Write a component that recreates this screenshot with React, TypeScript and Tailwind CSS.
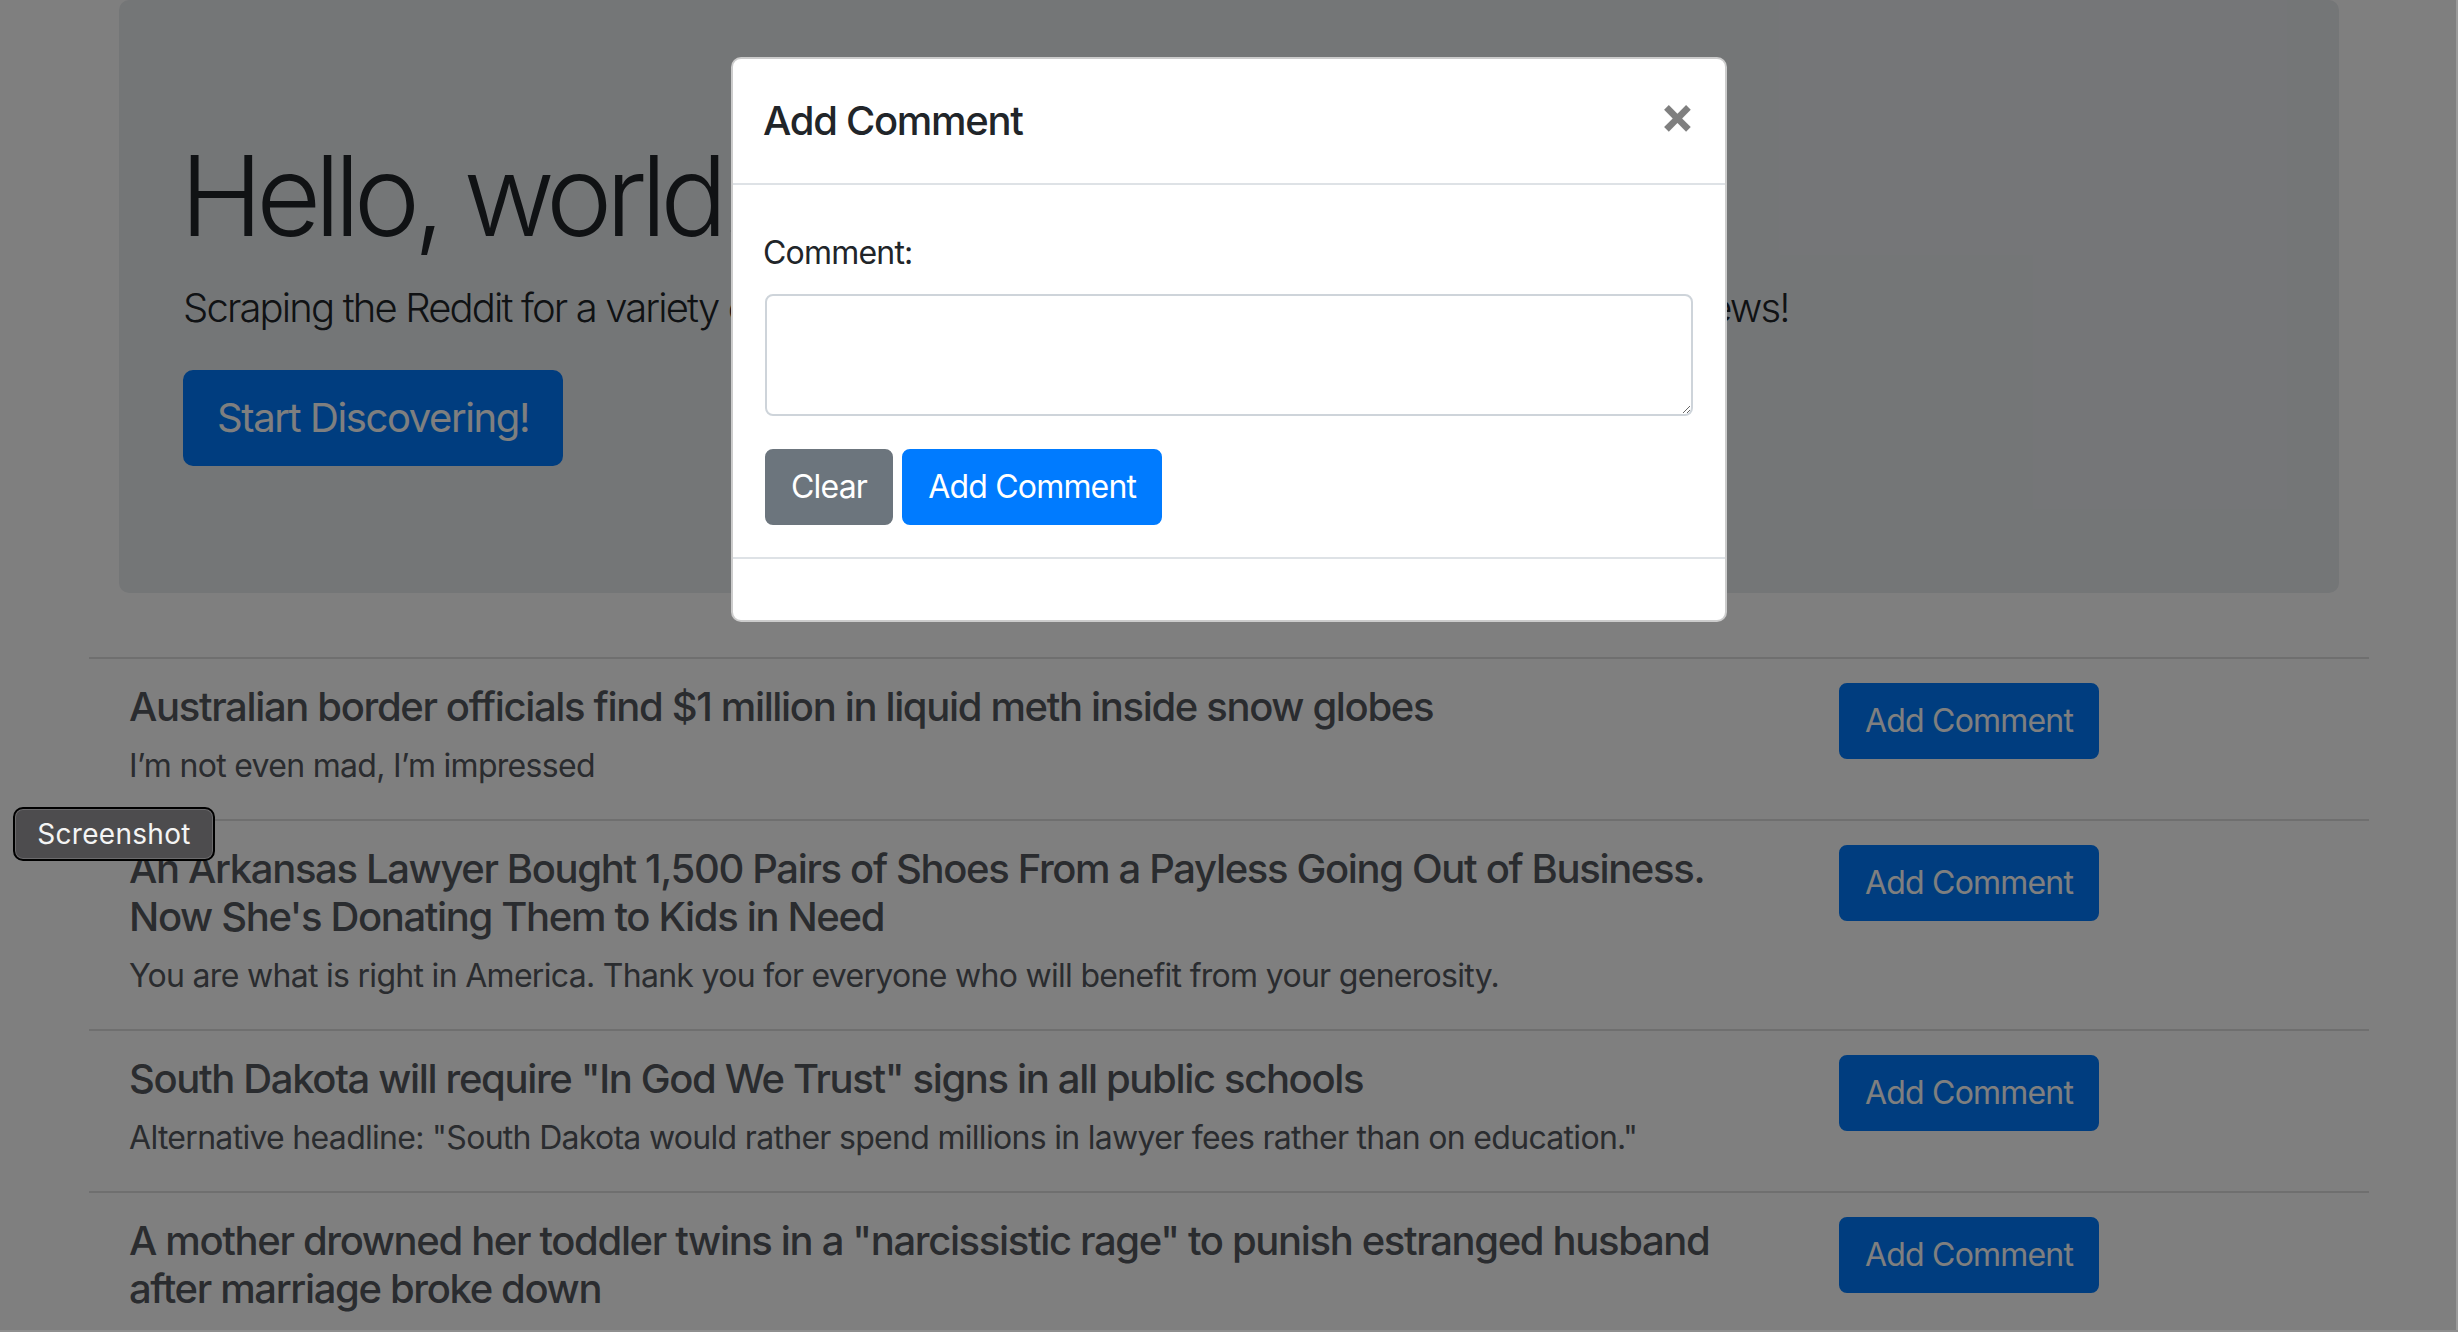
import React from 'react';

const posts = [
  {
    title: 'Australian border officials find $1 million in liquid meth inside snow globes',
    body: 'I\u2019m not even mad, I\u2019m impressed',
  },
  {
    title: 'An Arkansas Lawyer Bought 1,500 Pairs of Shoes From a Payless Going Out of Business. Now She\'s Donating Them to Kids in Need',
    body: 'You are what is right in America. Thank you for everyone who will benefit from your generosity.',
  },
  {
    title: 'South Dakota will require "In God We Trust" signs in all public schools',
    body: 'Alternative headline: "South Dakota would rather spend millions in lawyer fees rather than on education."',
  },
  {
    title: 'A mother drowned her toddler twins in a "narcissistic rage" to punish estranged husband after marriage broke down',
    body: 'This is so sad. Those poor babies.',
  },
];

const font = { fontFamily: 'Inter, "Liberation Sans", Arial, sans-serif' };

export default function App() {
  return (
    <div className="relative w-screen h-screen overflow-hidden bg-white text-[#212529]" style={font}>
      {/* PAGE */}
      <div className="w-[2280px] mx-auto">
        <div className="mx-[30px] bg-[#e9ecef] rounded-[10px] px-[64px] pt-[128px] pb-[127px] mb-[64px]">
          <h1 className="text-[112px] leading-[134px] font-light tracking-[-6.6px] -ml-[3px] mb-[16px]">Hello, world!</h1>
          <p className="text-[40px] leading-[60px] font-light mb-[32px] tracking-[-1.85px] whitespace-nowrap">
            Scraping the Reddit for a variety of the internet's most uplifting, funny, odd and interesting news!
          </p>
          <button className="bg-[#007bff] text-white text-[40px] leading-[60px] px-[32px] py-[16px] rounded-[10px] border-2 border-[#007bff] tracking-[-1.4px]">
            Start Discovering!
          </button>
        </div>

        <ul>
          {posts.map((p, i) => (
            <li key={i} className="border-t-2 border-[rgba(0,0,0,0.125)] px-[40px] py-[24px] flex items-start">
              <div className="w-[1620px] text-[#55585e]">
                <h5 className="text-[40px] leading-[48px] font-medium mb-[11px] tracking-[-1.35px]">{p.title}</h5>
                <p className="text-[32px] leading-[48px] pb-[5px] tracking-[-0.7px]">{p.body}</p>
              </div>
              <button className="ml-[90px] shrink-0 bg-[#007bff] text-white text-[32px] leading-[48px] px-[24px] py-[12px] rounded-[8px] border-2 border-[#007bff] tracking-[-0.8px]">
                Add Comment
              </button>
            </li>
          ))}
        </ul>
      </div>

      {/* BACKDROP */}
      <div className="absolute inset-0 bg-black/50" />

      {/* MODAL */}
      <div className="absolute inset-0 flex justify-center pt-[57px]">
        <div className="w-[996px] h-fit bg-white border-2 border-[rgba(0,0,0,0.2)] rounded-[10px] flex flex-col">
          <div className="flex items-start justify-between px-[32px] py-[32px] border-b-2 border-[#dee2e6]">
            <h5 className="text-[40px] leading-[60px] font-medium tracking-[-1.3px] -ml-[2px]">Add Comment</h5>
            <span className="text-[52px] leading-[60px] font-bold text-black/50 -mt-[6px] -mr-[2px]">&times;</span>
          </div>
          <div className="px-[32px] pt-[32px] pb-[32px]">
            <label className="block text-[32px] leading-[48px] mt-[12px] mb-[17px] tracking-[-0.8px] -ml-[2px]">Comment:</label>
            <textarea
              rows={2}
              className="block w-full h-[122px] border-2 border-[#ced4da] rounded-[8px] px-[24px] py-[12px] text-[32px] mb-[33px] resize-y outline-none"
            />
            <div className="flex gap-[9px]">
              <button className="bg-[#6c757d] text-white text-[32px] leading-[48px] px-[24px] py-[12px] rounded-[8px] border-2 border-[#6c757d] tracking-[-0.8px]">
                Clear
              </button>
              <button className="bg-[#007bff] text-white text-[32px] leading-[48px] px-[24px] py-[12px] rounded-[8px] border-2 border-[#007bff] tracking-[-0.8px]">
                Add Comment
              </button>
            </div>
          </div>
          <div className="h-[63px] border-t-2 border-[#dee2e6]" />
        </div>
      </div>

      {/* SCREENSHOT BUTTON (extension overlay) */}
      <div className="absolute left-[13px] top-[807px] w-[202px] h-[54px] rounded-[10px] border-2 border-black bg-[#4d4c4e] shadow-[inset_0_0_0_1px_#6b6a6c] flex items-center justify-center">
        <span className="text-[28px] text-[#f4f4f4] tracking-[0.3px]">Screenshot</span>
      </div>

      {/* window edges */}
      <div className="absolute top-0 right-0 w-[2px] h-full bg-[#9a9a9a]" />
      <div className="absolute bottom-0 left-0 w-full h-[2px] bg-[#8e8e8e]" />
    </div>
  );
}
